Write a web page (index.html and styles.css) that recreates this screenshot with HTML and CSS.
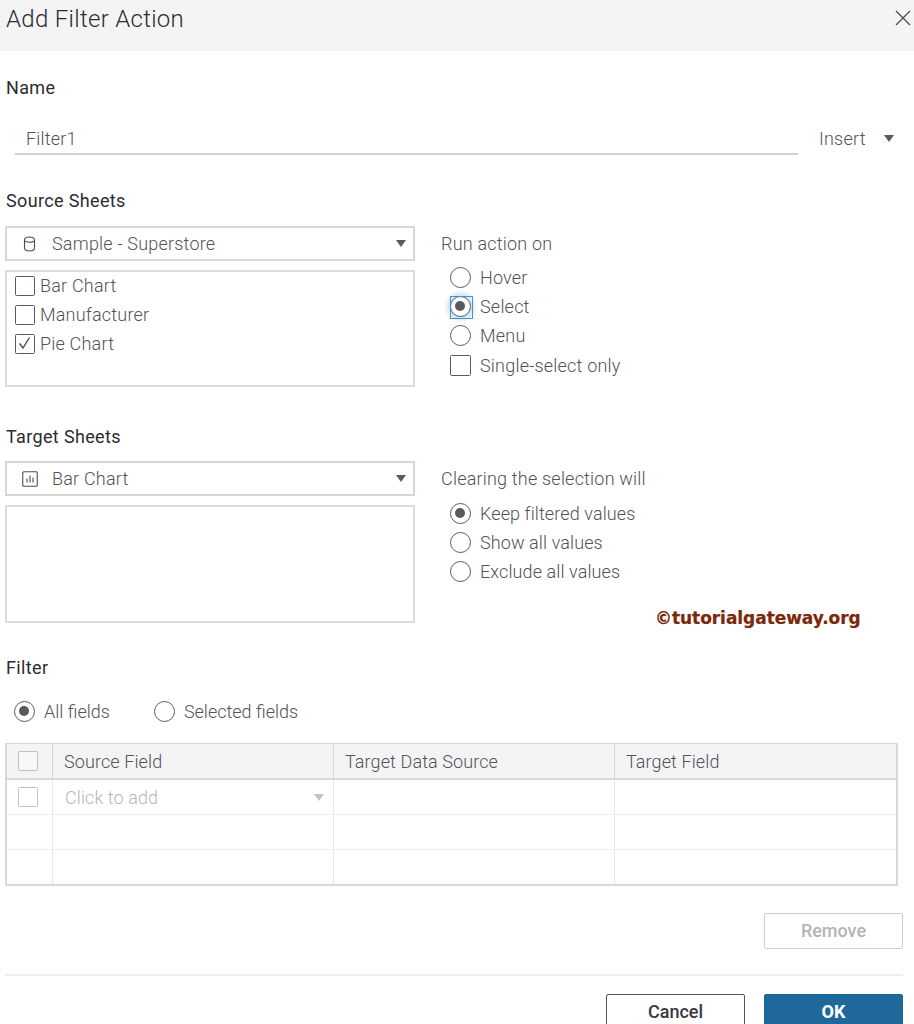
FILE: index.html
```html
<!DOCTYPE html>
<html lang="en">
<head>
<meta charset="utf-8">
<title>Add Filter Action</title>
<link rel="stylesheet" href="styles.css">
</head>
<body>
<div class="dialog">
  <header class="titlebar">
    <h1 class="title">Add Filter Action</h1>
    <svg class="close" width="16" height="16" viewBox="0 0 16 16"><path d="M1 1L15 15M15 1L1 15" stroke="#4f4a52" stroke-width="1.3" fill="none"/></svg>
  </header>

  <main class="body">
    <h2 class="label label-name">Name</h2>
    <div class="name-row">
      <div class="name-input">Filter1</div>
      <div class="insert">Insert<span class="caret caret-insert"></span></div>
    </div>

    <h2 class="label label-source">Source Sheets</h2>
    <div class="columns">
      <div class="left">
        <div class="select">
          <svg class="sel-icon" width="16" height="16" viewBox="0 0 16 16"><path d="M2.500 4c0-2 2-3 5-3s5 1 5 3v8c0 2-2 3-5 3s-5-1-5-3zM2.500 4c0 1.500 2 2.200 5 2.200s5-.7 5-2.200" stroke="#4f4a52" stroke-width="1.100" fill="none"/></svg>
          <span>Sample - Superstore</span>
          <span class="caret caret-select"></span>
        </div>
        <div class="list">
          <div class="check-row"><span class="box"></span>Bar Chart</div>
          <div class="check-row"><span class="box"></span>Manufacturer</div>
          <div class="check-row"><span class="box"><svg width="20" height="20" viewBox="0 0 20 20"><path d="M4.500 10.500L8 15L14.500 4.500" stroke="#4f4a52" stroke-width="1.400" fill="none"/></svg></span>Pie Chart</div>
        </div>
      </div>
      <div class="right">
        <div class="right-title">Run action on</div>
        <div class="option"><span class="radio"></span>Hover</div>
        <div class="option"><span class="radio radio-on radio-focus"></span>Select</div>
        <div class="option"><span class="radio"></span>Menu</div>
        <div class="option"><span class="box box-opt"></span>Single-select only</div>
      </div>
    </div>

    <h2 class="label label-target">Target Sheets</h2>
    <div class="columns columns-target">
      <div class="left">
        <div class="select">
          <svg class="sel-icon" width="16" height="16" viewBox="0 0 16 16"><rect x=".75" y=".75" width="14.500" height="14.500" rx="1" stroke="#4f4a52" stroke-width="1.100" fill="none"/><path d="M5 7.500v4M8 4.500v7M11 6.500v5" stroke="#4f4a52" stroke-width="1.100" fill="none"/></svg>
          <span>Bar Chart</span>
          <span class="caret caret-select"></span>
        </div>
        <div class="list list-target"></div>
      </div>
      <div class="right right-clear">
        <div class="right-title">Clearing the selection will</div>
        <div class="option"><span class="radio radio-on"></span>Keep filtered values</div>
        <div class="option"><span class="radio"></span>Show all values</div>
        <div class="option"><span class="radio"></span>Exclude all values</div>
        <div class="watermark">©tutorialgateway.org</div>
      </div>
    </div>

    <h2 class="label label-filter">Filter</h2>
    <div class="filter-options">
      <div class="filter-opt"><span class="radio radio-on"></span>All fields</div>
      <div class="filter-opt"><span class="radio"></span>Selected fields</div>
    </div>

    <div class="table">
      <div class="cell head first"><span class="box box-table box-head"></span></div>
      <div class="cell head">Source Field</div>
      <div class="cell head">Target Data Source</div>
      <div class="cell head">Target Field</div>

      <div class="cell first"><span class="box box-table"></span></div>
      <div class="cell muted">Click to add<span class="caret caret-table"></span></div>
      <div class="cell"></div>
      <div class="cell"></div>

      <div class="cell first"></div><div class="cell"></div><div class="cell"></div><div class="cell"></div>
      <div class="cell first"></div><div class="cell"></div><div class="cell"></div><div class="cell"></div>
    </div>

    <div class="remove-row"><button class="btn btn-disabled">Remove</button></div>
    <div class="divider"></div>
    <div class="actions">
      <button class="btn btn-cancel">Cancel</button>
      <button class="btn btn-ok">OK</button>
    </div>
  </main>
</div>
</body>
</html>
```
FILE: styles.css
```css
* { box-sizing: border-box; }
html, body { margin: 0; padding: 0; height: 1024px; overflow: hidden; background: #fff; }
body { font-family: Roboto, "Liberation Sans", sans-serif; font-weight: 300; font-size: 18px; letter-spacing: .2px; color: #55505a; }
.dialog { width: 914px; height: 1024px; overflow: hidden; }

.titlebar { height: 51px; background: #f4f4f4; display: flex; align-items: flex-start; justify-content: space-between; padding: 0 3px 0 6px; }
.title { margin: 0; font-size: 24px; font-weight: 300; line-height: 38px; color: #2e2a33; letter-spacing: .3px; }
.close { margin-top: 10px; }

.body { padding: 0 11px 0 5px; }
.label { margin: 0; padding-left: 1px; font-size: 18px; font-weight: 400; line-height: 24px; color: #2e2a33; letter-spacing: .35px; }
.label-name { margin-top: 25px; }
.label-source { margin-top: 34px; }
.label-target { margin-top: 38px; }
.label-filter { margin-top: 34px; }

.name-row { display: flex; align-items: stretch; margin-top: 18px; height: 37px; }
.name-input { width: 783px; margin-left: 10px; padding: 10px 0 0 11px; line-height: 22px; border-bottom: 2px solid #d0d0d0; }
.insert { margin-left: 21px; padding-top: 10px; line-height: 22px; display: flex; align-items: flex-start; }
.caret { display: inline-block; width: 0; height: 0; border-left: 5.500px solid transparent; border-right: 5.500px solid transparent; border-top: 7px solid #5c5860; }
.caret-insert { margin: 7px 0 0 18px; }

.columns { display: flex; margin-top: 13px; height: 161px; }
.columns-target { margin-top: 12px; }
.left { width: 410px; flex: none; }
.right { margin-left: 26px; flex: 1; }

.select { height: 35px; border: 2px solid #dad7d2; display: flex; align-items: center; padding: 0 7px 0 15px; }
.sel-icon { margin-right: 14px; flex: none; }
.select .caret { margin-left: auto; }

.list { margin-top: 9px; height: 117px; border: 2px solid #dedcd8; padding: 3.500px 0 0 8px; display: flex; flex-direction: column; gap: 9.200px; }
.list-target { height: 118px; }
.check-row { display: flex; align-items: center; height: 20px; }
.box { display: inline-block; width: 20px; height: 20px; border: 1.500px solid #5c5860; border-radius: 1.500px; margin-right: 5px; flex: none; }
.box svg { display: block; margin: -1.500px; }

.right-title { height: 30px; line-height: 30px; margin-top: 3px; }
.right-title + .option { margin-top: 4px; }
.right-clear .right-title + .option { margin-top: 5px; }
.right-clear .option { letter-spacing: .1px; }
.option { display: flex; align-items: center; height: 29.200px; padding-left: 9px; }
.radio { display: inline-block; width: 21px; height: 21px; border: 1.500px solid #5c5860; border-radius: 50%; margin-right: 9px; flex: none; position: relative; background: #fff; }
.radio-on::after { content: ""; position: absolute; left: 4px; top: 4px; width: 10px; height: 10px; border-radius: 50%; background: #5c5860; }
.radio-focus { box-shadow: 0 0 5px 3px #c4e0f4; }
.radio-focus::before { content: ""; position: absolute; left: -1.500px; top: -1.500px; width: 21px; height: 21px; border: 1.500px solid #4a8fc7; }
.box-opt { margin-right: 9px; width: 21px; height: 21px; }

.watermark { margin-top: 19px; margin-left: 214px; font-family: "DejaVu Sans", sans-serif; font-weight: 700; font-size: 17px; line-height: 24px; color: #7a2a0c; letter-spacing: -.05px; white-space: nowrap; text-shadow: 0 0 1px #caa; }

.filter-options { display: flex; margin-top: 19px; height: 24px; padding-left: 9px; letter-spacing: 0; }
.filter-opt { display: flex; align-items: center; }
.filter-opt .radio { margin-right: 9px; }
.filter-opt + .filter-opt { margin-left: 44px; }

.table { margin-top: 20px; width: 893px; height: 143px; border: 2px solid #d8d8d8; border-top-width: 1px; display: grid; grid-template-columns: 46px 281px 281px 1fr; grid-template-rows: 36px 35px 35px 1fr; letter-spacing: .1px; }
.cell { border-right: 1px solid #e6e6e6; border-bottom: 1px solid #ececec; display: flex; align-items: center; padding-left: 11px; }
.cell:nth-child(4n) { border-right: 0; }
.cell:nth-last-child(-n+4) { border-bottom: 0; }
.head { background: #f4f4f4; border-bottom: 2px solid #d8d8d8; border-right-color: #d8d8d8; }
.box-table { width: 20px; height: 20px; border-color: #c4c2be; margin: 0; }
.box-head { background: #f8f8f8; }
.muted { color: #b8b6b4; padding-left: 12px; }
.caret-table { margin-left: auto; margin-right: 9px; border-top-color: #c4c4c4; }

.remove-row { display: flex; justify-content: flex-end; margin-top: 27px; }
.btn { width: 139px; height: 36px; font-family: Roboto, "Liberation Sans", sans-serif; font-size: 18px; font-weight: 500; border-radius: 2px; background: #fff; padding: 0 0 2px; }
.btn-disabled { border: 1.500px solid #cfcfcf; color: #b4b4b4; }
.divider { height: 2px; background: #eeeeee; margin-top: 25px; }
.actions { display: flex; justify-content: flex-end; gap: 19px; margin-top: 18px; }
.btn-cancel { border: 1.500px solid #55505a; color: #3a3640; }
.btn-ok { border: 1px solid #1b6599; background: #1f689c; color: #fff; font-weight: 700; }
```
